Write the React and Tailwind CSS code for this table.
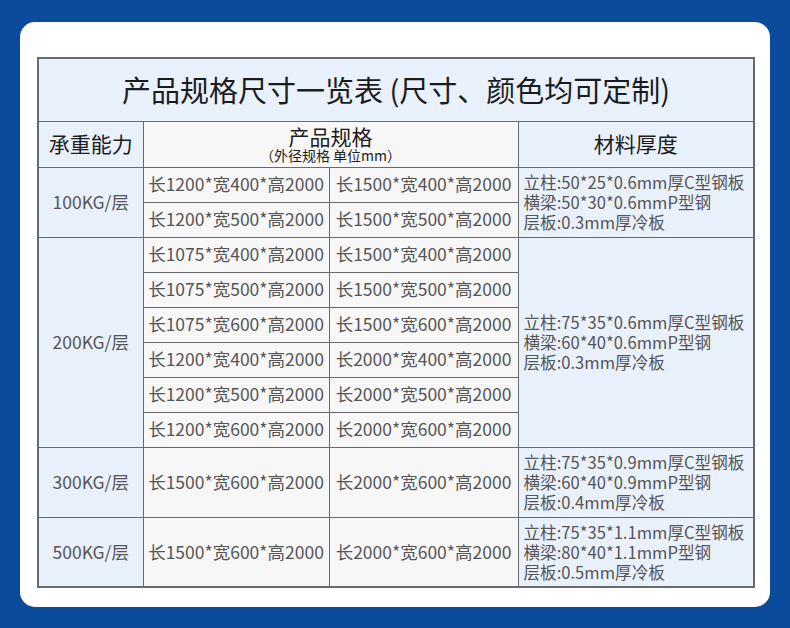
import React from "react";

const groups = [
  {
    load: "100KG/层",
    rows: [
      ["长1200*宽400*高2000", "长1500*宽400*高2000"],
      ["长1200*宽500*高2000", "长1500*宽500*高2000"],
    ],
    material: ["立柱:50*25*0.6mm厚C型钢板", "横梁:50*30*0.6mmP型钢", "层板:0.3mm厚冷板"],
  },
  {
    load: "200KG/层",
    rows: [
      ["长1075*宽400*高2000", "长1500*宽400*高2000"],
      ["长1075*宽500*高2000", "长1500*宽500*高2000"],
      ["长1075*宽600*高2000", "长1500*宽600*高2000"],
      ["长1200*宽400*高2000", "长2000*宽400*高2000"],
      ["长1200*宽500*高2000", "长2000*宽500*高2000"],
      ["长1200*宽600*高2000", "长2000*宽600*高2000"],
    ],
    material: ["立柱:75*35*0.6mm厚C型钢板", "横梁:60*40*0.6mmP型钢", "层板:0.3mm厚冷板"],
  },
  {
    load: "300KG/层",
    rows: [["长1500*宽600*高2000", "长2000*宽600*高2000"]],
    tall: true,
    material: ["立柱:75*35*0.9mm厚C型钢板", "横梁:60*40*0.9mmP型钢", "层板:0.4mm厚冷板"],
  },
  {
    load: "500KG/层",
    rows: [["长1500*宽600*高2000", "长2000*宽600*高2000"]],
    tall: true,
    material: ["立柱:75*35*1.1mm厚C型钢板", "横梁:80*40*1.1mmP型钢", "层板:0.5mm厚冷板"],
  },
];

const cell = "border border-[#6a6a6a]";

export default function App() {
  return (
    <div
      className="w-[790px] h-[628px] bg-[#0b4b9b] pt-[22px] px-[20px]"
      style={{ fontFamily: '"Noto Sans CJK SC", "Noto Sans", sans-serif' }}
    >
      <div className="w-[750px] h-[585px] bg-white rounded-[15px] pt-[35px] pl-[17px]">
        <table className="table-fixed border-collapse border-2 border-[#6a6a6a] w-[716px]">
          <colgroup>
            <col className="w-[105px]" />
            <col className="w-[186px]" />
            <col className="w-[189px]" />
            <col className="w-[236px]" />
          </colgroup>
          <tbody>
            <tr className="h-[63px]">
              <td colSpan={4} className={`${cell} bg-[#e9f1fd] text-center text-[29px] text-[#1c1c1c] leading-none`}>
                产品规格尺寸一览表 (尺寸、颜色均可定制)
              </td>
            </tr>
            <tr className="h-[46px]">
              <td className={`${cell} bg-[#e9f1fd] text-center text-[21px] text-[#1c1c1c]`}>承重能力</td>
              <td colSpan={2} className={`${cell} bg-[#f7f7f7] text-center text-[#1c1c1c]`}>
                <div className="text-[21px] leading-[21px]">产品规格</div>
                <div className="text-[14px] leading-[16px]">（外径规格 单位mm）</div>
              </td>
              <td className={`${cell} bg-[#e9f1fd] text-center text-[21px] text-[#1c1c1c]`}>材料厚度</td>
            </tr>
            {groups.map((g) =>
              g.rows.map((r, i) => (
                <tr key={g.load + i} className={g.tall ? "h-[70px]" : "h-[35px]"}>
                  {i === 0 && (
                    <td rowSpan={g.rows.length} className={`${cell} bg-[#e9f1fd] text-center text-[17.5px] text-[#555]`}>
                      {g.load}
                    </td>
                  )}
                  <td className={`${cell} bg-[#f7f7f7] text-center text-[17.5px] text-[#555] whitespace-nowrap p-0`}>{r[0]}</td>
                  <td className={`${cell} bg-[#f7f7f7] text-center text-[17.5px] text-[#555] whitespace-nowrap p-0`}>{r[1]}</td>
                  {i === 0 && (
                    <td rowSpan={g.rows.length} className={`${cell} bg-[#e9f1fd] text-[16.6px] leading-[20px] text-[#555] pl-[5px] whitespace-nowrap`}>
                      {g.material.map((m) => (
                        <div key={m}>{m}</div>
                      ))}
                    </td>
                  )}
                </tr>
              ))
            )}
          </tbody>
        </table>
      </div>
    </div>
  );
}
